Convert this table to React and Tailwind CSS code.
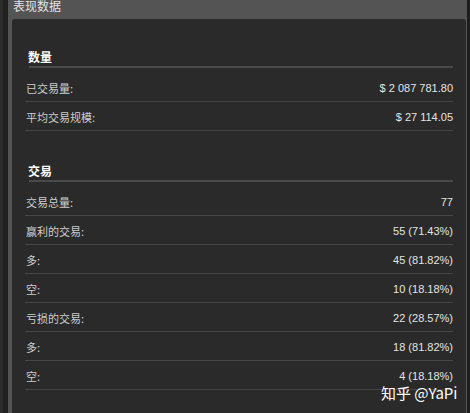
import React from "react";

const cjk = { fontFamily: '"Noto Sans CJK SC", "Noto Sans", sans-serif' };
const num = { fontFamily: '"Liberation Sans", Arial, sans-serif' };

function Row({ label, value }) {
  return (
    <div className="h-[29px] pt-[1px] flex items-center justify-between border-b border-[#454545]">
      <span className="pl-[1px] text-[11px] leading-[12px] text-[#cdcdcd]" style={cjk}>
        {label}
      </span>
      <span className="text-[11px] leading-[12px] text-[#e4e4e4]" style={num}>
        {value}
      </span>
    </div>
  );
}

function Section({ title, rows, top }) {
  return (
    <div className={top}>
      <div className="pl-[3px] h-[16px] flex items-center text-[12px] font-bold text-white" style={cjk}>
        {title}
      </div>
      <div className="mt-[1px] ml-[4px] h-[2px] bg-[#4a4a4a]" />
      <div className="mt-[5px] flex flex-col">
        {rows.map(([l, v], i) => (
          <Row key={i} label={l} value={v} />
        ))}
      </div>
    </div>
  );
}

export default function App() {
  return (
    <div className="relative w-[470px] h-[413px] overflow-hidden flex bg-[#222222]">
      <div className="w-[3px] bg-[#2c2c2c]" />
      <div className="w-[5px] bg-[#202020]" />
      <div className="w-[459px] flex flex-col bg-[#545454]">
        <div className="h-[19px] pl-[5px]">
          <div className="text-[12px] leading-[11px] text-[#e2e2e2]" style={cjk}>
            表现数据
          </div>
        </div>
        <div className="flex-1 ml-[4px] mr-[1px] bg-[#2a2a2a] rounded-t-[3px] px-[13px] pt-[30px]">
          <Section
            title="数量"
            rows={[
              ["已交易量:", "$ 2 087 781.80"],
              ["平均交易规模:", "$ 27 114.05"],
            ]}
          />
          <Section
            top="mt-[32px]"
            title="交易"
            rows={[
              ["交易总量:", "77"],
              ["赢利的交易:", "55 (71.43%)"],
              ["多:", "45 (81.82%)"],
              ["空:", "10 (18.18%)"],
              ["亏损的交易:", "22 (28.57%)"],
              ["多:", "18 (81.82%)"],
              ["空:", "4 (18.18%)"],
            ]}
          />
        </div>
      </div>
      <div className="w-[3px] bg-[#1e1e1e]" />
      <div
        className="absolute left-[381px] top-[384px] text-[15px] leading-[18px] text-white whitespace-nowrap"
        style={cjk}
      >
        知乎 @YaPi
      </div>
    </div>
  );
}
